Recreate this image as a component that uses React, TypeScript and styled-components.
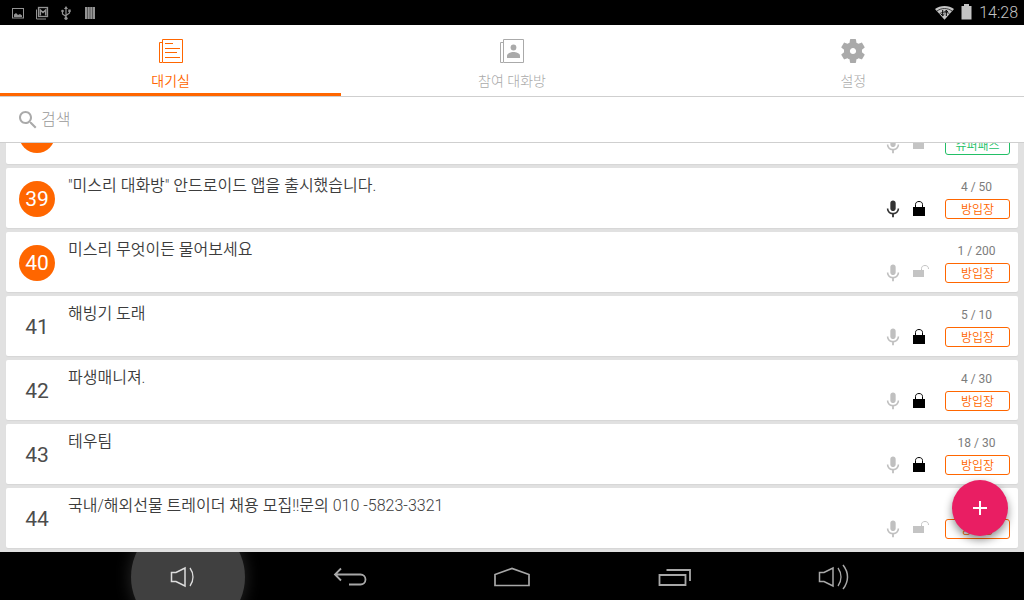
import React from "react";
import styled, { createGlobalStyle } from "styled-components";

const ORANGE = "#ff6600";
const GREEN = "#22bf66";

const GlobalStyle = createGlobalStyle`
  *, *::before, *::after { box-sizing: border-box; }
  body {
    margin: 0;
    background: #fff;
    font-family: Roboto, "Noto Sans CJK KR", sans-serif;
  }
  button, input { font: inherit; }
`;

const Screen = styled.div`
  display: flex;
  flex-direction: column;
  height: 100vh;
  overflow: hidden;
`;

const StatusBar = styled.header`
  display: flex;
  flex: none;
  align-items: center;
  justify-content: space-between;
  height: 25px;
  padding: 0 6px 0 10px;
  background: #000;
  color: #bebebe;
`;

const StatusGroup = styled.div<{ $gap: number; $dim?: boolean }>`
  display: flex;
  align-items: center;
  gap: ${(p) => p.$gap}px;
  color: ${(p) => (p.$dim ? "#939393" : "#c4c4c4")};
`;

const Clock = styled.time`
  font-size: 16px;
  line-height: 24px;
  font-weight: 300;
`;

const Icon = styled.svg`
  display: block;
  flex: none;
`;

const Tabs = styled.nav`
  display: flex;
  flex: none;
  border-bottom: 1px solid #cfcfcf;
  background: #fff;
`;

const Tab = styled.button<{ $active?: boolean }>`
  display: flex;
  flex: 1 1 0;
  flex-direction: column;
  align-items: center;
  gap: 8px;
  padding: 14px 0 2px;
  border: 0;
  border-bottom: 3px solid ${(p) => (p.$active ? ORANGE : "transparent")};
  background: none;
  color: ${(p) => (p.$active ? ORANGE : "#aaa")};
  cursor: pointer;
`;

const TabLabel = styled.span<{ $active?: boolean }>`
  font-size: 14px;
  font-weight: ${(p) => (p.$active ? 350 : 300)};
  line-height: 20px;
  color: ${(p) => (p.$active ? ORANGE : "#aaa")};
`;

const SearchBar = styled.label`
  display: flex;
  flex: none;
  align-items: center;
  gap: 1px;
  height: 46px;
  padding: 0 16px;
  border-bottom: 1px solid #cfcfcf;
  background: #fff;
  color: #aaa;
`;

const SearchInput = styled.input`
  flex: 1;
  min-width: 0;
  height: 24px;
  padding: 0;
  border: 0;
  outline: 0;
  background: none;
  color: #444;
  font-size: 16px;
  font-weight: 300;

  &::placeholder {
    color: #999;
    opacity: 1;
  }
`;

const ListArea = styled.main`
  position: relative;
  display: flex;
  flex: 1;
  flex-direction: column;
  justify-content: flex-end;
  min-height: 0;
  overflow: hidden;
  background: #e1e1e1;
`;

const RoomList = styled.ul`
  display: flex;
  flex: none;
  flex-direction: column;
  gap: 4px;
  margin: 0;
  padding: 4px 6px;
  list-style: none;
`;

const RoomCard = styled.li`
  display: flex;
  height: 60px;
  padding: 0 8px 0 13px;
  border-radius: 2px;
  background: #fff;
  box-shadow: 0 1px 1px rgba(0, 0, 0, 0.05);
`;

const RoomNumber = styled.span<{ $featured?: boolean }>`
  flex: none;
  align-self: center;
  width: 36px;
  height: 36px;
  margin: 2px 13px 0 0;
  border-radius: 50%;
  background: ${(p) => (p.$featured ? ORANGE : "transparent")};
  color: ${(p) => (p.$featured ? "#fff" : "#4c4c4c")};
  font-size: 21px;
  line-height: 36px;
  text-align: center;
`;

const RoomTitle = styled.h2`
  flex: 1;
  min-width: 0;
  margin: 0;
  padding-top: 6px;
  overflow: hidden;
  color: #3c3c3c;
  font-size: 16px;
  font-weight: 350;
  line-height: 24px;
  text-overflow: ellipsis;
  white-space: nowrap;
`;

const RoomFlags = styled.div`
  display: flex;
  flex: none;
  align-self: flex-end;
  gap: 6px;
  margin: 0 16px 9px 0;
`;

const RoomEntry = styled.div`
  display: flex;
  flex: none;
  flex-direction: column;
  justify-content: flex-end;
  width: 65px;
  padding-bottom: 9px;
`;

const Capacity = styled.span`
  color: #7c7c7c;
  font-size: 12px;
  line-height: 16px;
  margin-bottom: 4px;
  padding-right: 2px;
  text-align: center;
`;

const EnterButton = styled.button<{ $color: string }>`
  height: 20px;
  padding: 2px 0 0;
  border: 1px solid ${(p) => p.$color};
  border-radius: 3px;
  background: #fff;
  color: ${(p) => p.$color};
  font-size: 12px;
  font-weight: 350;
  line-height: 16px;
  cursor: pointer;
`;

const AddButton = styled.button`
  position: absolute;
  right: 16px;
  bottom: 16px;
  display: flex;
  align-items: center;
  justify-content: center;
  width: 56px;
  height: 56px;
  padding: 0;
  border: 0;
  border-radius: 50%;
  background: #e91e63;
  color: #fff;
  box-shadow: 0 4px 8px rgba(0, 0, 0, 0.45);
  cursor: pointer;
`;

const SystemNav = styled.footer`
  display: flex;
  flex: none;
  justify-content: center;
  height: 48px;
  padding-top: 2px;
  overflow: hidden;
  background: #000;
`;

const SystemButton = styled.button<{ $pressed?: boolean }>`
  position: relative;
  display: flex;
  align-items: center;
  justify-content: center;
  flex: 0 1 162px;
  padding: 0;
  border: 0;
  background: none;
  color: ${(p) => (p.$pressed ? "#ddd" : "#a8a8a8")};

  &::before {
    content: "";
    display: ${(p) => (p.$pressed ? "block" : "none")};
    position: absolute;
    top: 50%;
    left: 50%;
    width: 114px;
    height: 114px;
    border-radius: 50%;
    background: #404040;
    box-shadow: 0 0 16px 1px rgba(64, 64, 64, 0.6);
    transform: translate(-50%, -50%);
  }

  & > svg { position: relative; }
`;

const MicIcon = ({ on }: { on?: boolean }) => (
  <Icon width="20" height="20" viewBox="0 0 24 24" fill={on ? "#333" : "#c0c0c0"} aria-hidden>
    <path d="M12 14.500c1.800 0 3.200-1.500 3.200-3.200V5c0-1.800-1.400-3.200-3.200-3.200S8.800 3.200 8.800 5v6.300c0 1.700 1.400 3.200 3.200 3.200zM17.500 11.300c0 3-2.600 5.300-5.500 5.300s-5.500-2.300-5.500-5.300H4.600c0 3.600 2.800 6.600 6.300 7.100V21.800h2.200v-3.400c3.500-.500 6.300-3.500 6.300-7.100z" />
  </Icon>
);

const LockIcon = ({ locked }: { locked?: boolean }) =>
  locked ? (
    <Icon width="20" height="20" viewBox="0 0 20 20" aria-hidden>
      <rect x="4" y="8" width="12" height="9" fill="#000" />
      <path d="M6.500 8V5.500C6.500 3.500 8 2.500 10 2.500s3.500 1 3.500 3V8" fill="none" stroke="#000" />
    </Icon>
  ) : (
    <Icon width="20" height="20" viewBox="0 0 20 20" aria-hidden>
      <rect x="4" y="7" width="11" height="7" fill="#c4c4c4" />
      <path d="M12.500 7V5.500C12.500 3.500 14 2.500 16 2.500s3.500 1 3.500 3.500" fill="none" stroke="#c4c4c4" />
    </Icon>
  );

const SpeakerIcon = ({ loud }: { loud?: boolean }) => (
  <Icon width="36" height="28" viewBox="0 0 36 28" fill="none" stroke="currentColor" strokeWidth="1.500" aria-hidden>
    <path d="M1.500 9.500H6L15 5v18l-9-4.500H1.500z" />
    <path d="M20 5c4 5.500 4 12.500 0 18" strokeWidth="1.300" />
    {loud && <path d="M25 2c6 7.500 6 16.500 0 24" strokeWidth="1.500" />}
  </Icon>
);

interface Room {
  number: number;
  title?: string;
  capacity?: string;
  featured?: boolean;
  mic?: boolean;
  locked?: boolean;
  pass?: boolean;
}

const rooms: Room[] = [
  { number: 38, featured: true, pass: true },
  { number: 39, title: '"미스리 대화방" 안드로이드 앱을 출시했습니다.', capacity: "4 / 50", featured: true, mic: true, locked: true },
  { number: 40, title: "미스리 무엇이든 물어보세요", capacity: "1 / 200", featured: true },
  { number: 41, title: "해빙기 도래", capacity: "5 / 10", locked: true },
  { number: 42, title: "파생매니져.", capacity: "4 / 30", locked: true },
  { number: 43, title: "테우팀", capacity: "18 / 30", locked: true },
  { number: 44, title: "국내/해외선물 트레이더 채용 모집!!문의 010 -5823-3321" },
];

export default function App() {
  return (
    <>
      <GlobalStyle />
      <Screen>
        <StatusBar>
          <StatusGroup $gap={8} $dim>
            <Icon width="16" height="16" viewBox="0 0 16 16" aria-hidden>
              <rect x="2.500" y="3.500" width="11" height="9.500" fill="none" stroke="currentColor" />
              <path d="M4 12V9.500l2-1.500 2 2 2-1 2 1.500V12z" fill="currentColor" />
            </Icon>
            <Icon width="16" height="16" viewBox="0 0 16 16" fill="none" stroke="currentColor" aria-hidden>
              <path d="M2.500 4.500v9.500H12" />
              <rect x="4.500" y="2.500" width="9" height="9" strokeWidth="1.300" />
              <path d="M6.300 10.500V5L9 7.500 11.700 5v5.500" strokeWidth="1.600" />
            </Icon>
            <Icon width="16" height="16" viewBox="0 0 16 16" fill="none" stroke="currentColor" strokeWidth="1.200" aria-hidden>
              <path d="M8 13V3M8 11.500L4.500 9V6.500M8 10.500L11.500 8V5.500" />
              <path d="M8 1L6 4h4zM10.300 4.500h2.400v2.400h-2.400z" fill="currentColor" stroke="none" />
              <circle cx="4.500" cy="6" r="1.300" fill="currentColor" stroke="none" />
              <circle cx="8" cy="13.300" r="1.600" fill="currentColor" stroke="none" />
            </Icon>
            <Icon width="16" height="16" viewBox="0 0 16 16" aria-hidden>
              <path d="M3 2h10v12H3z" fill="currentColor" />
              <path d="M5.500 2v12M8 2v12M10.500 2v12" stroke="#000" strokeWidth=".4" />
            </Icon>
          </StatusGroup>
          <StatusGroup $gap={6}>
            <Icon width="20" height="16" viewBox="0 0 20 16" aria-hidden>
              <path d="M0 4C5 0 14 0 19 4L9.500 14.800z" fill="currentColor" />
              <path d="M2 6c4.500-3.300 10.500-3.300 15 0M4.500 8.800c3-2.200 7-2.200 10 0" fill="none" stroke="#000" strokeWidth=".7" />
              <path d="M7.700 5v5.500M6 8.800l1.700 2 1.800-1.800M11.300 11V5.500M9.500 7.200l1.800-2 1.700 2" fill="none" stroke="#000" />
            </Icon>
            <Icon width="12" height="18" viewBox="0 0 12 18" fill="currentColor" aria-hidden>
              <path d="M3 0h5v2h2.500v13.500H.5V2H3z" />
            </Icon>
            <Clock>14:28</Clock>
          </StatusGroup>
        </StatusBar>

        <Tabs>
          <Tab type="button" $active aria-current="page">
            <Icon width="24" height="24" viewBox="0 0 24 24" fill="none" stroke="currentColor" aria-hidden>
              <path d="M3.500.5h20v23h-20zM3 3.500H.5v20H3" />
              <path d="M6 4.500h8M6 9.500h15M6 13.500h12M6 18.500h15" />
            </Icon>
            <TabLabel $active>대기실</TabLabel>
          </Tab>
          <Tab type="button">
            <Icon width="24" height="24" viewBox="0 0 24 24" fill="none" stroke="currentColor" aria-hidden>
              <path d="M3.500.5h20v23h-20zM3 3.500H.5v20H3" />
              <circle cx="13.500" cy="8.500" r="2.900" fill="currentColor" stroke="none" />
              <path d="M7 19v-2.500c0-2.200 4-3.500 6.500-3.500s6.500 1.300 6.500 3.500V19z" fill="currentColor" stroke="none" />
            </Icon>
            <TabLabel>참여 대화방</TabLabel>
          </Tab>
          <Tab type="button">
            <Icon width="24" height="24" viewBox="2 2 20 20" fill="currentColor" aria-hidden>
              <path d="M19.430 12.980c.040-.320.070-.640.070-.980s-.030-.660-.070-.980l2.110-1.650c.190-.150.240-.420.120-.640l-2-3.460c-.120-.220-.390-.300-.610-.220l-2.490 1c-.520-.400-1.080-.730-1.690-.980l-.380-2.650C14.460 2.180 14.250 2 14 2h-4c-.250 0-.460.180-.490.420l-.380 2.650c-.610.250-1.170.590-1.690.980l-2.490-1c-.230-.090-.490 0-.610.220l-2 3.460c-.130.220-.070.490.120.640l2.110 1.650c-.040.320-.070.650-.070.980s.030.660.070.980l-2.110 1.650c-.190.150-.240.420-.120.640l2 3.460c.120.220.390.300.610.220l2.490-1c.520.400 1.080.730 1.690.980l.380 2.650c.030.240.240.420.490.420h4c.250 0 .460-.180.490-.420l.380-2.650c.610-.250 1.170-.590 1.690-.980l2.490 1c.230.090.490 0 .610-.220l2-3.460c.120-.220.070-.490-.120-.640l-2.110-1.650zM12 14.600c-1.430 0-2.600-1.170-2.600-2.600s1.170-2.600 2.600-2.600 2.600 1.170 2.600 2.600-1.170 2.600-2.600 2.600z" />
            </Icon>
            <TabLabel>설정</TabLabel>
          </Tab>
        </Tabs>

        <SearchBar>
          <Icon width="24" height="24" viewBox="0 0 24 24" fill="currentColor" aria-hidden>
            <path d="M15.500 14h-.790l-.280-.270C15.410 12.590 16 11.110 16 9.500 16 5.910 13.090 3 9.500 3S3 5.910 3 9.500 5.910 16 9.500 16c1.610 0 3.090-.590 4.230-1.570l.270.280v.790l5 4.990L20.490 19l-4.990-5zm-6 0C7.010 14 5 11.990 5 9.500S7.010 5 9.500 5 14 7.010 14 9.500 11.990 14 9.500 14z" />
          </Icon>
          <SearchInput type="text" placeholder="검색" aria-label="검색" />
        </SearchBar>

        <ListArea>
          <RoomList>
            {rooms.map((room) => (
              <RoomCard key={room.number}>
                <RoomNumber $featured={room.featured}>{room.number}</RoomNumber>
                <RoomTitle>{room.title}</RoomTitle>
                <RoomFlags>
                  <MicIcon on={room.mic} />
                  <LockIcon locked={room.locked} />
                </RoomFlags>
                <RoomEntry>
                  {room.capacity && <Capacity>{room.capacity}</Capacity>}
                  <EnterButton type="button" $color={room.pass ? GREEN : ORANGE}>
                    {room.pass ? "슈퍼패스" : "방입장"}
                  </EnterButton>
                </RoomEntry>
              </RoomCard>
            ))}
          </RoomList>
          <AddButton type="button" aria-label="방 만들기">
            <Icon width="14" height="14" viewBox="0 0 14 14" fill="none" stroke="currentColor" strokeWidth="2" aria-hidden>
              <path d="M7 0v14M0 7h14" />
            </Icon>
          </AddButton>
        </ListArea>

        <SystemNav>
          <SystemButton type="button" $pressed aria-label="볼륨 작게">
            <SpeakerIcon />
          </SystemButton>
          <SystemButton type="button" aria-label="뒤로">
            <Icon width="34" height="20" viewBox="0 0 34 20" fill="none" stroke="currentColor" strokeWidth="1.800" aria-hidden>
              <path d="M8 1.500L2 7.500l6 6M2 7.500h25.500a5 5 0 0 1 0 10H16" />
            </Icon>
          </SystemButton>
          <SystemButton type="button" aria-label="홈">
            <Icon width="36" height="20" viewBox="0 0 36 20" fill="none" stroke="currentColor" strokeWidth="1.700" aria-hidden>
              <path d="M1 18.500V7.500L18 1.500l17 6v11z" />
            </Icon>
          </SystemButton>
          <SystemButton type="button" aria-label="최근 앱">
            <Icon width="34" height="18" viewBox="0 0 34 18" fill="none" stroke="currentColor" strokeWidth="1.800" aria-hidden>
              <path d="M2.500 7h26v10h-26zM9.500 2H33v11" />
            </Icon>
          </SystemButton>
          <SystemButton type="button" aria-label="볼륨 크게">
            <SpeakerIcon loud />
          </SystemButton>
        </SystemNav>
      </Screen>
    </>
  );
}
